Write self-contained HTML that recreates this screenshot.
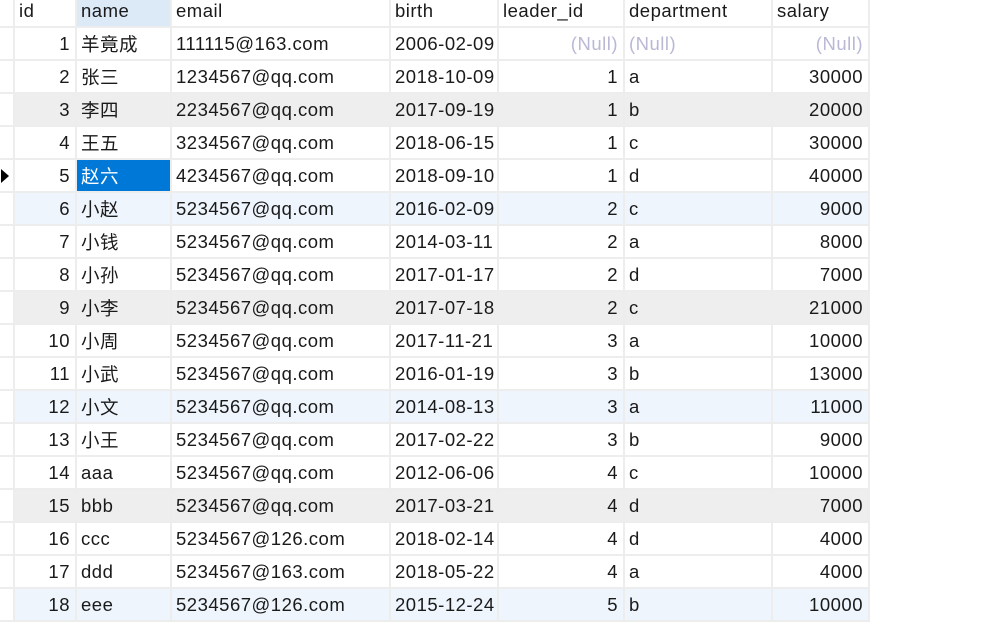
<!DOCTYPE html>
<html><head><meta charset="utf-8"><style>
html,body{margin:0;padding:0;background:#fff;width:992px;height:613px;overflow:hidden}
table{border-collapse:collapse;table-layout:fixed;width:869px;position:absolute;left:0;top:0;font-family:"Liberation Sans","Noto Sans CJK SC",sans-serif;font-size:18.5px;letter-spacing:0.5px;color:#1a1a1a}
td{border-right:2px solid #ededed;border-bottom:2px solid #ededed;height:31px;padding:0 4px;white-space:nowrap;overflow:hidden;box-sizing:border-box}
td.rt,td.nl{padding-right:5px}
tr.h td{height:27px;padding-top:0;vertical-align:top;line-height:22px}
tr.r td{height:33px}
td.g{padding:0}
td.rt{text-align:right}
tr.gr td{background:#eeeeee}
tr.bl td{background:#eef5fd}
tr td.g{background:#fff}
td.nl{color:#b9b9d6;text-align:right}
td.nll{color:#b9b9d6}
td.sel{background:#0078d7!important;color:#fff}
td.hn{background:#dce9f7}
</style></head><body>
<table>
<colgroup><col style="width:14px"><col style="width:62px"><col style="width:95px"><col style="width:219px"><col style="width:108px"><col style="width:126px"><col style="width:148px"><col style="width:97px"></colgroup>
<tr class="h"><td class="g"></td><td>id</td><td class="hn">name</td><td>email</td><td>birth</td><td>leader_id</td><td>department</td><td>salary</td></tr>
<tr class="r"><td class="g"></td><td class="rt">1</td><td>羊竟成</td><td>111115@163.com</td><td>2006-02-09</td><td class="nl">(Null)</td><td class="nll">(Null)</td><td class="nl">(Null)</td></tr>
<tr class="r"><td class="g"></td><td class="rt">2</td><td>张三</td><td>1234567@qq.com</td><td>2018-10-09</td><td class="rt">1</td><td>a</td><td class="rt">30000</td></tr>
<tr class="r gr"><td class="g"></td><td class="rt">3</td><td>李四</td><td>2234567@qq.com</td><td>2017-09-19</td><td class="rt">1</td><td>b</td><td class="rt">20000</td></tr>
<tr class="r"><td class="g"></td><td class="rt">4</td><td>王五</td><td>3234567@qq.com</td><td>2018-06-15</td><td class="rt">1</td><td>c</td><td class="rt">30000</td></tr>
<tr class="r"><td class="g" style="position:relative"><svg width="10" height="14" style="position:absolute;left:1px;top:9px"><polygon points="0,0 8,7 0,14" fill="#000"/></svg></td><td class="rt">5</td><td class="sel">赵六</td><td>4234567@qq.com</td><td>2018-09-10</td><td class="rt">1</td><td>d</td><td class="rt">40000</td></tr>
<tr class="r bl"><td class="g"></td><td class="rt">6</td><td>小赵</td><td>5234567@qq.com</td><td>2016-02-09</td><td class="rt">2</td><td>c</td><td class="rt">9000</td></tr>
<tr class="r"><td class="g"></td><td class="rt">7</td><td>小钱</td><td>5234567@qq.com</td><td>2014-03-11</td><td class="rt">2</td><td>a</td><td class="rt">8000</td></tr>
<tr class="r"><td class="g"></td><td class="rt">8</td><td>小孙</td><td>5234567@qq.com</td><td>2017-01-17</td><td class="rt">2</td><td>d</td><td class="rt">7000</td></tr>
<tr class="r gr"><td class="g"></td><td class="rt">9</td><td>小李</td><td>5234567@qq.com</td><td>2017-07-18</td><td class="rt">2</td><td>c</td><td class="rt">21000</td></tr>
<tr class="r"><td class="g"></td><td class="rt">10</td><td>小周</td><td>5234567@qq.com</td><td>2017-11-21</td><td class="rt">3</td><td>a</td><td class="rt">10000</td></tr>
<tr class="r"><td class="g"></td><td class="rt">11</td><td>小武</td><td>5234567@qq.com</td><td>2016-01-19</td><td class="rt">3</td><td>b</td><td class="rt">13000</td></tr>
<tr class="r bl"><td class="g"></td><td class="rt">12</td><td>小文</td><td>5234567@qq.com</td><td>2014-08-13</td><td class="rt">3</td><td>a</td><td class="rt">11000</td></tr>
<tr class="r"><td class="g"></td><td class="rt">13</td><td>小王</td><td>5234567@qq.com</td><td>2017-02-22</td><td class="rt">3</td><td>b</td><td class="rt">9000</td></tr>
<tr class="r"><td class="g"></td><td class="rt">14</td><td>aaa</td><td>5234567@qq.com</td><td>2012-06-06</td><td class="rt">4</td><td>c</td><td class="rt">10000</td></tr>
<tr class="r gr"><td class="g"></td><td class="rt">15</td><td>bbb</td><td>5234567@qq.com</td><td>2017-03-21</td><td class="rt">4</td><td>d</td><td class="rt">7000</td></tr>
<tr class="r"><td class="g"></td><td class="rt">16</td><td>ccc</td><td>5234567@126.com</td><td>2018-02-14</td><td class="rt">4</td><td>d</td><td class="rt">4000</td></tr>
<tr class="r"><td class="g"></td><td class="rt">17</td><td>ddd</td><td>5234567@163.com</td><td>2018-05-22</td><td class="rt">4</td><td>a</td><td class="rt">4000</td></tr>
<tr class="r bl"><td class="g"></td><td class="rt">18</td><td>eee</td><td>5234567@126.com</td><td>2015-12-24</td><td class="rt">5</td><td>b</td><td class="rt">10000</td></tr>
</table>
</body></html>
